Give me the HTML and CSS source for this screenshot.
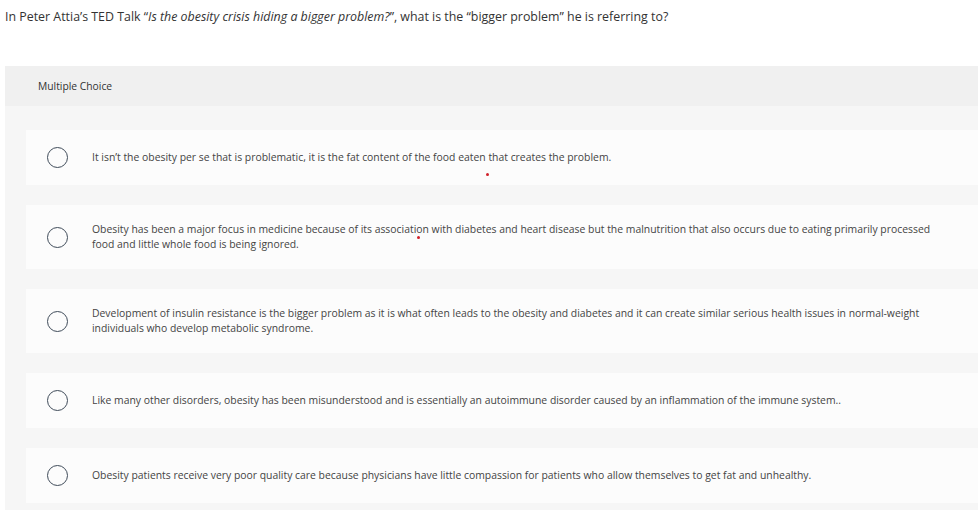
FILE: index.html
```html
<!DOCTYPE html>
<html>
<head>
<meta charset="utf-8">
<link rel="stylesheet" href="styles.css">
</head>
<body>
<div class="page">
  <p class="question">In Peter Attia’s TED Talk “<em>Is the obesity crisis hiding a bigger problem?</em>”, what is the “bigger problem” he is referring to?</p>
  <section class="panel">
    <header class="panel-head">Multiple Choice</header>
    <div class="options">
      <label class="option">
        <span class="radio"></span>
        <span class="text">It isn’t the obesity per se that is problematic, it is the fat content of the food eaten that creates the problem.</span>
        <span class="dot dot-a"></span>
      </label>
      <label class="option">
        <span class="radio"></span>
        <span class="text">Obesity has been a major focus in medicine because of its association with diabetes and heart disease but the malnutrition that also occurs due to eating primarily processed food and little whole food is being ignored.</span>
        <span class="dot dot-b"></span>
      </label>
      <label class="option">
        <span class="radio"></span>
        <span class="text">Development of insulin resistance is the bigger problem as it is what often leads to the obesity and diabetes and it can create similar serious health issues in normal-weight individuals who develop metabolic syndrome.</span>
      </label>
      <label class="option">
        <span class="radio"></span>
        <span class="text">Like many other disorders, obesity has been misunderstood and is essentially an autoimmune disorder caused by an inflammation of the immune system..</span>
      </label>
      <label class="option">
        <span class="radio"></span>
        <span class="text">Obesity patients receive very poor quality care because physicians have little compassion for patients who allow themselves to get fat and unhealthy.</span>
      </label>
    </div>
  </section>
</div>
</body>
</html>
```
FILE: styles.css
```css
html, body {
  margin: 0;
  padding: 0;
  background: #ffffff;
  overflow: hidden;
}
.page {
  font-family: "Open Sans", "Liberation Sans", sans-serif;
  color: #3d3d3d;
}
.question {
  margin: 0;
  padding: 9px 0 0 5px;
  font-size: 12.4px;
  line-height: 16px;
  color: #333333;
  height: 57px;
}
.question em {
  font-style: italic;
}
.panel {
  margin-left: 5px;
  width: 1000px;
  background: #f6f6f6;
}
.panel-head {
  background: #f0f0f0;
  height: 40px;
  padding-left: 33px;
  font-size: 10.3px;
  line-height: 40px;
  color: #333333;
}
.options {
  display: flex;
  flex-direction: column;
  gap: 20px;
  padding: 24px 0 20px 21px;
}
.option {
  position: relative;
  display: flex;
  align-items: center;
  background: #fcfcfc;
  padding: 17px 60px 17px 21px;
}
.radio {
  flex: none;
  width: 21px;
  height: 21px;
  border: 1.5px solid #3f4b59;
  border-radius: 50%;
  box-sizing: border-box;
  margin-right: 24px;
}
.text {
  font-size: 10.4px;
  line-height: 15px;
  color: #444444;
  max-width: 858px;
}
.dot {
  position: absolute;
  width: 3px;
  height: 3px;
  border-radius: 50%;
  background: #d0202a;
}
.dot-a {
  left: 460px;
  top: 43px;
}
.dot-b {
  left: 391px;
  top: 31px;
}
```
